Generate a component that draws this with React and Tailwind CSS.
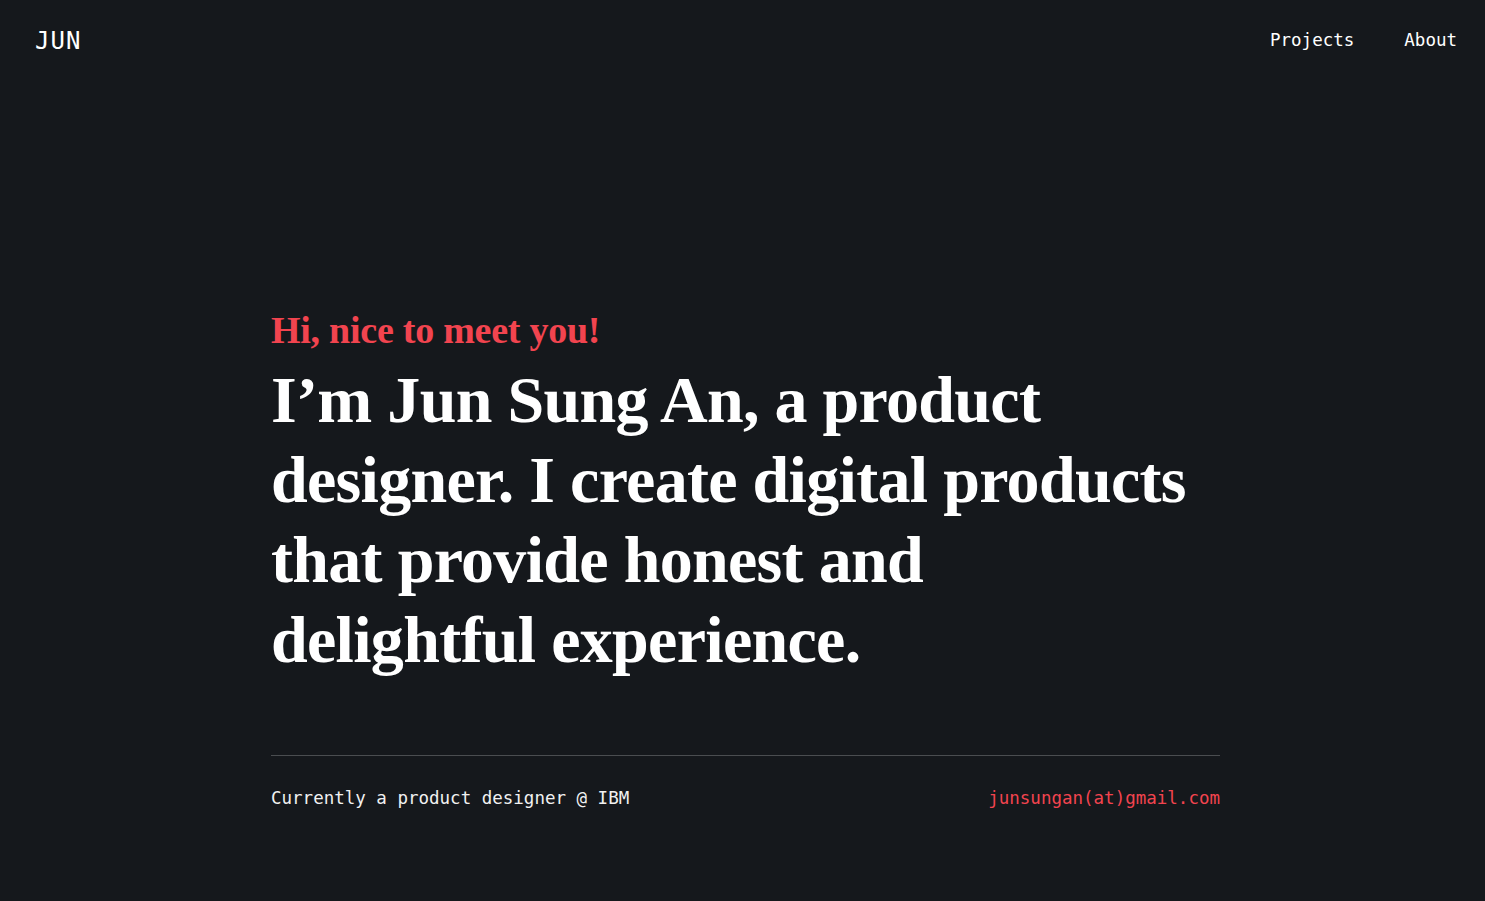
export default function App() {
  const mono = { fontFamily: '"DejaVu Sans Mono", "Liberation Mono", monospace' };
  const serif = { fontFamily: '"Liberation Serif", "DejaVu Serif", serif' };
  return (
    <div className="min-h-[901px] w-full bg-[#15181c] text-white">
      <header className="flex items-center justify-between pl-[35px] pr-[28px] h-[81px]" style={mono}>
        <div className="text-[24px] tracking-[1px]">JUN</div>
        <nav className="flex gap-[50px] text-[17.5px]">
          <span>Projects</span>
          <span>About</span>
        </nav>
      </header>
      <main className="mx-auto w-[955px] pl-[6px] pt-[223px]">
        <p className="text-[38px] leading-[52px] font-bold text-[#f2444f] tracking-[-0.25px]" style={serif}>
          Hi, nice to meet you!
        </p>
        <h1 className="mt-[4px] text-[66px] leading-[80px] font-bold tracking-[-0.7px]" style={serif}>
          I’m Jun Sung An, a product<br />
          designer. I create digital products<br />
          that provide honest and<br />
          delightful experience.
        </h1>
        <div className="mt-[75px] border-t border-[#4a4d50]" />
        <div className="flex justify-between pt-[29px] text-[17.5px]" style={mono}>
          <span className="text-[#f1f1f1]">Currently a product designer @ IBM</span>
          <span className="text-[#f2444f]">junsungan(at)gmail.com</span>
        </div>
      </main>
    </div>
  );
}
